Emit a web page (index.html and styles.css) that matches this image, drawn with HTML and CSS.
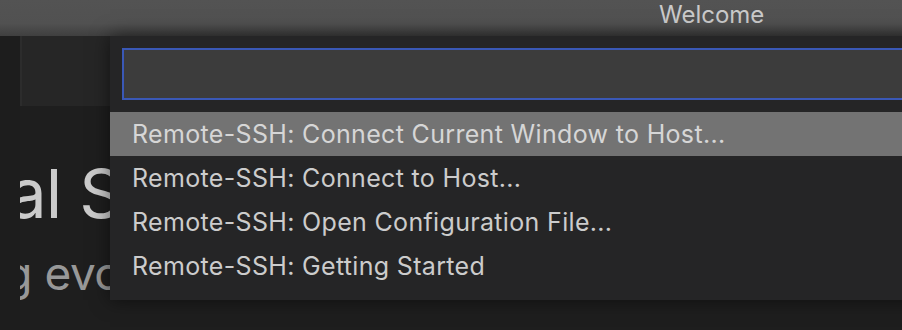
FILE: index.html
```html
<!doctype html>
<html lang="en">
<head>
    <meta charset="UTF-8">
    <title>Welcome</title>
    <link rel="stylesheet" href="styles.css">
</head>
<body>

<div class="titlebar">
    <div class="title">Welcome</div>
</div>

<div class="workbench">
    <div class="activity"></div>
    <div class="editor">
        <div class="tabs"></div>
        <div class="welcome">
            <h1 class="heading">Visual Studio Code</h1>
            <p class="subheading">Editing evolved</p>
        </div>
    </div>
</div>

<div class="quick-pick">
    <div class="quick-input"></div>
    <div class="list">
        <div class="item item-focused">Remote-SSH: Connect Current Window to Host...</div>
        <div class="item">Remote-SSH: Connect to Host...</div>
        <div class="item">Remote-SSH: Open Configuration File...</div>
        <div class="item">Remote-SSH: Getting Started</div>
    </div>
</div>

</body>
</html>
```

FILE: styles.css
```css
*{
    padding: 0;
    margin: 0;
    box-sizing: border-box;
    font-family: 'Inter', 'Liberation Sans', sans-serif;
}

body{
    background: #1e1e1e;
    width: 902px;
    height: 330px;
    overflow: hidden;
    position: relative;
}

.titlebar{
    height: 36px;
    background: linear-gradient(#535353 0, #515151 65%, #3f3f3f 100%);
    display: flex;
    align-items: center;
    padding-left: 659px;
}
.title{
    color: #cacaca;
    font-size: 24px;
    line-height: 36px;
    padding-bottom: 6px;
}

.workbench{
    display: flex;
    height: 294px;
}
.activity{
    width: 20px;
    background: #1d1d1d;
}
.editor{
    flex: 1;
    overflow: hidden;
}
.tabs{
    height: 70px;
    background: #262626;
    border-left: 2px solid #2c2c2c;
}
.welcome{
    padding-top: 47px;
    margin-left: -147px;
    white-space: nowrap;
}
.heading{
    font-size: 68px;
    font-weight: 400;
    line-height: 80px;
    color: #cbcbcb;
    letter-spacing: -1px;
}
.subheading{
    margin-top: 12px;
    margin-left: 14px;
    font-size: 46px;
    line-height: 56px;
    color: #989898;
    letter-spacing: -0.5px;
}

/* overlay */
.quick-pick{
    position: absolute;
    top: 36px;
    left: 110px;
    width: 900px;
    background: #252526;
    padding: 12px 0 12px 0;
    box-shadow: 0 0 18px rgba(0, 0, 0, 0.55);
}
.quick-input{
    height: 52px;
    margin-left: 12px;
    background: #3c3c3c;
    border: 2px solid #3a58b6;
}
.list{
    margin-top: 12px;
}
.item{
    height: 44px;
    line-height: 44px;
    padding-left: 22px;
    font-size: 25px;
    letter-spacing: 0.33px;
    color: #cccccc;
    white-space: nowrap;
}
.item-focused{
    background: #737373;
    color: #d6d6d6;
}
```
